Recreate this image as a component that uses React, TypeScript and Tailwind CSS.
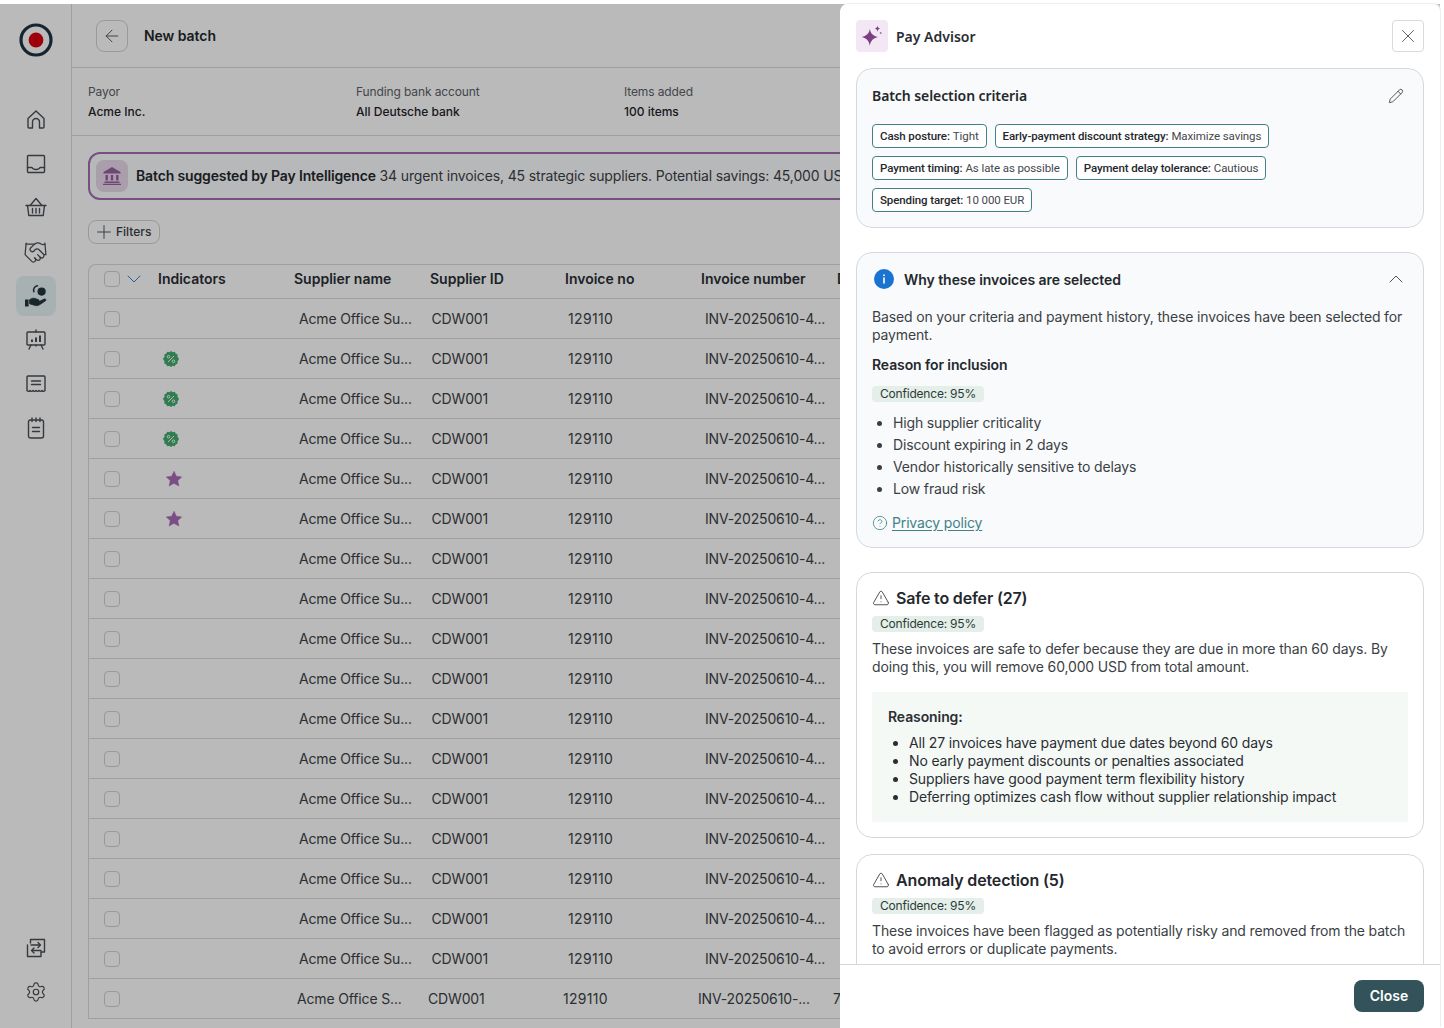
import React from "react";
import { ArrowLeft, Plus, ChevronDown, ChevronUp, X, Pencil, CircleHelp, TriangleAlert, Settings, Handshake } from "lucide-react";

const inter = "font-['Inter','Liberation_Sans',sans-serif]";
const plex = "font-['Noto_Sans','Liberation_Sans',sans-serif]";
const chipFont = "font-['Roboto','Liberation_Sans',sans-serif]";

function Logo() {
  return (
    <svg width="34" height="34" viewBox="0 0 34 34">
      <circle cx="17" cy="17" r="15" fill="none" stroke="#1d3345" strokeWidth="3.2" />
      <circle cx="17" cy="17" r="7.4" fill="#d8000f" />
    </svg>
  );
}

const iconStroke = { fill: "none", stroke: "#4a4f55", strokeWidth: 1.4, strokeLinecap: "round" as const, strokeLinejoin: "round" as const };

function HomeIcon() {
  return (
    <svg className="-mt-[2px]" width="18" height="19" viewBox="0 0 18 19" {...iconStroke}>
      <path d="M1 8.500 9 1l8 7.500v8.500a1 1 0 0 1-1 1h-3.500v-6a3.500 3.500 0 0 0-7 0v6H2a1 1 0 0 1-1-1z" />
    </svg>
  );
}
function Tray() {
  return (
    <svg width="20" height="20" viewBox="0 0 20 20" {...iconStroke}>
      <rect x="1.500" y="1.500" width="17" height="17" rx="1" />
      <path d="M1.500 13.500h4.500c.6 1.400 2 2 4 2s3.400-.6 4-2h4.500" />
    </svg>
  );
}
function Basket() {
  return (
    <svg className="-mt-[2px]" width="22" height="20" viewBox="0 0 22 20" {...iconStroke}>
      <path d="M1 8.500h20" />
      <path d="M2.500 8.500 3.800 18.500h14.400L19.500 8.500" />
      <path d="M5.500 8 11 1.500 16.500 8" />
      <path d="M7.500 11.500v4.500M11 11.500v4.500M14.500 11.500v4.500" />
    </svg>
  );
}
function HandCoin() {
  return (
    <svg width="24" height="24" viewBox="0 0 24 24">
      <path d="M1 15.500h3.600v7H1z" fill="#21363d" />
      <path d="M5.600 15.800c2-1.800 4.400-2 6.400-1l2.600 1c1 .5.7 1.800-.4 1.800h-3.200 4l5.400-2.600c1.200-.5 2.200 1 1.100 1.800l-6 4c-1.400.9-3 1-4.400.6l-5.500-1.600z" fill="#21363d" stroke="#21363d" strokeWidth=".8" strokeLinejoin="round" />
      <circle cx="17.600" cy="7.600" r="4.100" fill="#21363d" />
      <path d="M13.500 1.800a4.400 4.400 0 0 0-3.600 6" fill="none" stroke="#21363d" strokeWidth="1.500" strokeLinecap="round" />
    </svg>
  );
}
function Board() {
  return (
    <svg width="22" height="22" viewBox="0 0 22 22" {...iconStroke}>
      <rect x="2" y="3" width="18" height="13" rx="1" />
      <path d="M11 1v2M6 16l-2 4M16 16l2 4M11 16v1" />
      <path d="M7 13v-2.500M11 13V8.500M15 13V6.500" strokeWidth="2" strokeLinecap="butt" />
    </svg>
  );
}
function Receipt() {
  return (
    <svg width="20" height="18" viewBox="0 0 20 18" {...iconStroke}>
      <path d="M1 15.500V2a1 1 0 0 1 1-1h16a1 1 0 0 1 1 1v13.500c-1.100 1.200-2.100 1.200-3 0-1 1.200-2 1.200-3 0-1 1.200-2 1.200-3 0-1 1.200-2 1.200-3 0-1 1.200-2 1.200-3 0-.9 1.200-1.900 1.200-3 0z" />
      <path d="M5.500 6h9M5.500 9.500h9" />
    </svg>
  );
}
function Notepad() {
  return (
    <svg className="-mt-[1px]" width="18" height="22" viewBox="0 0 18 22" {...iconStroke}>
      <rect x="1.500" y="3" width="15" height="18" rx="2" />
      <path d="M5 1v3.500M9 1v3.500M13 1v3.500M5.500 10.500h7M5.500 14.500h7" />
    </svg>
  );
}
function Transfer() {
  return (
    <svg width="20" height="20" viewBox="0 0 20 20" {...iconStroke}>
      <path d="M4.500 5V1.500h14V14h-3.500" />
      <path d="M1.500 7v11.500H15V14" />
      <path d="M5 7H14.500M12 4.500 14.500 7 12 9.500M15 12.500H5.500M8 10 5.500 12.500 8 15" />
    </svg>
  );
}
function Bank() {
  return (
    <svg width="20" height="18" viewBox="0 0 20 18" fill="#9a5fa3">
      <path d="M10 0 18.500 5v1.500h-17V5z" />
      <path d="M3.500 8h2.400v5.500H3.500zM8.800 8h2.400v5.500H8.800zM14.100 8h2.400v5.500h-2.400zM2.500 14.500h15V16h-15zM1 16.800h18V18H1z" />
    </svg>
  );
}
function Percent() {
  return (
    <svg width="16" height="16" viewBox="0 0 16 16">
      <path d="M8 0l1.700 1.200 2-.4 1 1.800 1.900.8-.1 2.100L16 8l-1.500 2.500.1 2.100-1.900.8-1 1.800-2-.4L8 16l-1.700-1.200-2 .4-1-1.800-1.900-.8.1-2.100L0 8l1.500-2.500-.1-2.100 1.900-.8 1-1.800 2 .4z" fill="#44ab6e" />
      <path d="M5 11 11 5" stroke="#ffffff" strokeWidth="1" />
      <circle cx="5.500" cy="5.700" r="1.300" fill="none" stroke="#ffffff" strokeWidth="1" />
      <circle cx="10.500" cy="10.300" r="1.300" fill="none" stroke="#ffffff" strokeWidth="1" />
    </svg>
  );
}
function Star() {
  return (
    <svg width="16" height="16" viewBox="0 0 14 14">
      <path d="M7 .3l2 4.300 4.700.6-3.400 3.200.9 4.700L7 10.800l-4.200 2.300.9-4.700L.3 5.200 5 4.600z" fill="#a86cb5" stroke="#a86cb5" strokeWidth=".5" strokeLinejoin="round" />
    </svg>
  );
}
function Sparkle() {
  return (
    <svg width="24" height="24" viewBox="0 0 22 22" fill="#7b3f82">
      <path d="M9 4.500c.7 4 2.800 6.200 7.500 7.500-4.700 1.300-6.800 3.500-7.500 8-.7-4.500-2.800-6.700-7.500-8C6.200 10.700 8.300 8.500 9 4.500z" />
      <path d="M16 1.500c.3 1.500 1 2.300 2.500 2.700-1.500.4-2.200 1.200-2.500 2.800-.3-1.600-1-2.400-2.500-2.800 1.500-.4 2.200-1.200 2.500-2.700zM19 7c.1.7.4 1 1.200 1.200-.8.2-1.100.5-1.200 1.200-.1-.7-.4-1-1.200-1.200.8-.2 1.100-.5 1.200-1.200z" />
    </svg>
  );
}
function Info() {
  return (
    <svg width="20" height="20" viewBox="0 0 20 20">
      <circle cx="10" cy="10" r="10" fill="#1a73d1" />
      <rect x="9.200" y="8.500" width="1.600" height="6" fill="#fff" />
      <rect x="9.200" y="5.500" width="1.600" height="1.600" fill="#fff" />
    </svg>
  );
}

const NavItem = ({ children, active }: { children: React.ReactNode; active?: boolean }) => (
  <div className={`flex h-10 w-10 items-center justify-center rounded-lg ${active ? "bg-[#e6f3f5]" : ""}`}>{children}</div>
);

function Sidebar() {
  return (
    <aside className="flex h-full w-[72px] shrink-0 flex-col items-center border-r border-[#d8dade] bg-white pt-[19px]">
      <Logo />
      <div className="mt-[43px] flex flex-col gap-1">
        <NavItem><HomeIcon /></NavItem>
        <NavItem><Tray /></NavItem>
        <NavItem><Basket /></NavItem>
        <NavItem><Handshake size={25} strokeWidth={1.2} color="#4a4f55" /></NavItem>
        <NavItem active><HandCoin /></NavItem>
        <NavItem><Board /></NavItem>
        <NavItem><Receipt /></NavItem>
        <NavItem><Notepad /></NavItem>
      </div>
      <div className="mt-auto mb-4 flex flex-col gap-1">
        <NavItem><Transfer /></NavItem>
        <NavItem><Settings size={22} strokeWidth={1.3} color="#4a4f55" /></NavItem>
      </div>
    </aside>
  );
}

const Meta = ({ label, value }: { label: string; value: string }) => (
  <div className="w-[268px] shrink-0">
    <div className="text-[12px] leading-4 tracking-[-0.12px] text-[#5c6168]">{label}</div>
    <div className="mt-1 text-[12px] font-medium leading-4 text-[#1f2328]">{value}</div>
  </div>
);

const Box = () => <span className="block h-4 w-4 shrink-0 rounded-[4px] border border-[#cfd2d6] bg-white" />;

const Row = ({ mark, last }: { mark?: "p" | "s"; last?: boolean }) => (
  <div className="flex h-10 items-center border-b border-[#d8dade] text-[14px] leading-5 tracking-[-0.15px] text-[#3b3f45]">
    <div className="flex w-[208px] shrink-0 items-center pl-[15px]">
      <Box />
      {mark === "p" && <span className="ml-[43px]"><Percent /></span>}
      {mark === "s" && <span className="ml-[46px]"><Star /></span>}
    </div>
    {last ? (
      <>
        <div className="w-[131px] shrink-0 whitespace-nowrap">Acme Office S...</div>
        <div className="w-[135px] shrink-0">CDW001</div>
        <div className="w-[135px] shrink-0 tracking-[0.3px]">129110</div>
        <div className="w-[135px] shrink-0 whitespace-nowrap">INV-20250610-...</div>
        <div className="whitespace-nowrap">7</div>
      </>
    ) : (
      <>
        <div className="w-[133px] shrink-0 whitespace-nowrap pl-[2px]">Acme Office Su...</div>
        <div className="w-[136px] shrink-0 whitespace-nowrap pl-[1.500px]">CDW001</div>
        <div className="w-[136px] shrink-0 whitespace-nowrap pl-[2px] tracking-[0.35px]">129110</div>
        <div className="shrink-0 whitespace-nowrap pl-[3px]">INV-20250610-4...</div>
      </>
    )}
  </div>
);

const marks: ("p" | "s" | undefined)[] = [undefined, "p", "p", "p", "s", "s", ...Array(12).fill(undefined)];

function Main() {
  return (
    <main className={`${inter} h-full min-w-0 flex-1 overflow-hidden bg-white`}>
      <header className="flex h-16 items-center gap-[14px] border-b border-[#d8dade] pl-6">
        <span className="flex h-8 w-8 items-center justify-center rounded-lg border border-[#d0d3d8]"><ArrowLeft size={20} strokeWidth={1.100} color="#4a4f55" /></span>
        <span className="pl-[2px] text-[14px] font-semibold tracking-[-0.05px] text-[#24282d]">New batch</span>
      </header>
      <section className="flex h-[68px] items-center border-b border-[#d8dade] pl-4 pt-[1px]">
        <Meta label="Payor" value="Acme Inc." />
        <Meta label="Funding bank account" value="All Deutsche bank" />
        <Meta label="Items added" value="100 items" />
      </section>
      <div className="pl-4 pt-4">
        <div className="flex h-[48px] w-[1340px] items-center gap-2 rounded-xl border-2 border-[#a96cb3] bg-[#fbfdff] pl-[6px]">
          <span className="flex h-8 w-8 shrink-0 items-center justify-center rounded-lg bg-[#e9d9eb]"><Bank /></span>
          <span className="mb-[1px] whitespace-nowrap text-[14px] tracking-[-0.14px] text-[#24282d]"><b className="font-semibold">Batch suggested by Pay Intelligence</b> <span className="text-[#3b3f45]">34 urgent invoices, 45 strategic suppliers. Potential savings: 45,000 USD</span></span>
        </div>
        <div className="mt-[20px] flex h-6 w-[72px] items-center gap-[1px] rounded-lg border border-[#d0d3d8] pl-[4px] text-[12px] font-medium text-[#3b3f45]">
          <Plus size={22} strokeWidth={1} color="#3b4f55" /><span className="mb-[1px]">Filters</span>
        </div>
        <div className="mt-[20px] w-[1340px] rounded-t-lg border-x border-t border-[#d8dade]">
          <div className="flex h-[34px] items-center border-b border-[#d8dade] pb-[6px] text-[14px] font-semibold text-[#2a2e33]">
            <div className="flex w-[205px] shrink-0 items-center pl-[15px]">
              <Box />
              <ChevronDown size={24} strokeWidth={0.9} color="#1a73d1" className="ml-[2px]" />
              <span className="ml-[12px]">Indicators</span>
            </div>
            <div className="w-[136px] shrink-0">Supplier name</div>
            <div className="w-[135px] shrink-0">Supplier ID</div>
            <div className="w-[136px] shrink-0">Invoice no</div>
            <div className="w-[136px] shrink-0">Invoice number</div>
            <div>Due date</div>
          </div>
          {marks.map((m, i) => <Row key={i} mark={m} last={i === 17} />)}
        </div>
      </div>
    </main>
  );
}

const Chip = ({ k, v }: { k: string; v: string }) => (
  <span className="flex h-6 items-center whitespace-nowrap rounded-[4px] border border-[#3f8288] bg-white px-[7px] pt-[1px] text-[11.500px] tracking-[-0.1px] text-[#43484e]">
    <b className="mr-[3px] font-medium text-[#24282d]">{k}</b>{v}
  </span>
);

const Conf = () => (
  <span className="inline-flex h-4 items-center rounded-[4px] bg-[#e3efe8] px-2 text-[12px] leading-4 tracking-[-0.2px] text-[#2f3a37]">Confidence: 95%</span>
);

function Panel() {
  return (
    <aside className={`${inter} absolute bottom-0 left-[840px] top-1 flex w-[600px] flex-col rounded-t-lg bg-white shadow-[1px_-1px_0_#eeeeee]`}>
      <div className="flex h-16 shrink-0 items-center justify-between pl-4 pr-4">
        <div className="flex items-center gap-2">
          <span className="flex h-8 w-8 items-center justify-center rounded-[4px] bg-[#f3e6f5]"><Sparkle /></span>
          <span className={`${plex} text-[14px] font-semibold text-[#2a2e33]`}>Pay Advisor</span>
        </div>
        <span className="flex h-8 w-8 items-center justify-center rounded-[4px] border border-[#d8dade]"><X size={22} strokeWidth={0.9} color="#3b3f45" /></span>
      </div>
      <div className="min-h-0 flex-1 overflow-hidden px-4">
        <section className="h-40 rounded-2xl border border-[#d5d8de] bg-[#f9fafb] px-[15px] pt-[15px]">
          <div className="flex h-[22px] items-center justify-between pr-[4px]">
            <h2 className={`${plex} text-[14px] font-semibold tracking-[-0.08px] text-[#24282d]`}>Batch selection criteria</h2>
            <Pencil size={16} strokeWidth={1.200} color="#2a2e33" className="mt-[1px]" />
          </div>
          <div className={`${chipFont} mt-[18px] flex flex-col gap-2`}>
            <div className="flex gap-2"><Chip k="Cash posture:" v="Tight" /><Chip k="Early-payment discount strategy:" v="Maximize savings" /></div>
            <div className="flex gap-2"><Chip k="Payment timing:" v="As late as possible" /><Chip k="Payment delay tolerance:" v="Cautious" /></div>
            <div className="flex gap-2"><Chip k="Spending target:" v="10 000 EUR" /></div>
          </div>
        </section>
        <section className="mt-6 h-[296px] rounded-2xl border border-[#d5d8de] bg-[#f9fafb] px-[15px] pt-[16px]">
          <div className="flex h-5 items-center justify-between pr-[4px]">
            <div className="flex items-center gap-[10px] pl-[2px]">
              <Info />
              <h2 className="text-[14px] font-semibold tracking-[-0.05px] text-[#24282d]">Why these invoices are selected</h2>
            </div>
            <ChevronUp size={24} strokeWidth={0.9} color="#3b3f45" className="mr-[-4px]" />
          </div>
          <p className="mt-[19px] text-[14px] leading-[18px] tracking-[-0.15px] text-[#3b3f45]">Based on your criteria and payment history, these invoices have been selected for payment.</p>
          <h3 className="mt-[12px] text-[14px] font-semibold leading-[18px] tracking-[-0.1px] text-[#24282d]">Reason for inclusion</h3>
          <div className="mt-[12px] flex"><Conf /></div>
          <ul className="mt-[10px] list-disc pl-[21px] text-[14px] leading-[22px] tracking-[-0.15px] text-[#3b3f45] marker:text-[#3b3f45]">
            <li>High supplier criticality</li>
            <li>Discount expiring in 2 days</li>
            <li>Vendor historically sensitive to delays</li>
            <li>Low fraud risk</li>
          </ul>
          <div className="mt-[13px] flex items-center gap-[4px] text-[14px] leading-5 tracking-[-0.15px] text-[#3f8288]">
            <CircleHelp size={16} strokeWidth={1.200} />
            <span className="underline underline-offset-2">Privacy policy</span>
          </div>
        </section>
        <section className="mt-6 h-[266px] rounded-2xl border border-[#d5d8de] bg-white px-[15px] pt-[15px]">
          <div className="flex h-5 items-center gap-[6px]">
            <TriangleAlert size={18} strokeWidth={1.100} color="#2a2e33" />
            <h2 className="text-[16px] font-semibold tracking-[-0.17px] text-[#24282d]">Safe to defer (27)</h2>
          </div>
          <div className="mt-[8px] flex"><Conf /></div>
          <p className="mt-[8px] text-[14px] leading-[18px] tracking-[-0.15px] text-[#3b3f45]">These invoices are safe to defer because they are due in more than 60 days. By doing this, you will remove 60,000 USD from total amount.</p>
          <div className="mt-4 h-[130px] bg-[#f5f9f6] px-4 pt-4 text-[14px] text-[#2a2e33]">
            <div className="font-semibold leading-[18px] tracking-[-0.1px]">Reasoning:</div>
            <ul className="mt-[8px] list-disc pl-[21px] leading-[18px] tracking-[-0.15px]">
              <li>All 27 invoices have payment due dates beyond 60 days</li>
              <li>No early payment discounts or penalties associated</li>
              <li>Suppliers have good payment term flexibility history</li>
              <li>Deferring optimizes cash flow without supplier relationship impact</li>
            </ul>
          </div>
        </section>
        <section className="mt-4 h-[200px] rounded-2xl border border-[#d5d8de] bg-white px-[15px] pt-[15px]">
          <div className="flex h-5 items-center gap-[6px]">
            <TriangleAlert size={18} strokeWidth={1.100} color="#2a2e33" />
            <h2 className="text-[16px] font-semibold tracking-[-0.15px] text-[#24282d]">Anomaly detection (5)</h2>
          </div>
          <div className="mt-[8px] flex"><Conf /></div>
          <p className="mt-[8px] text-[14px] leading-[18px] tracking-[-0.15px] text-[#3b3f45]">These invoices have been flagged as potentially risky and removed from the batch to avoid errors or duplicate payments.</p>
        </section>
      </div>
      <footer className="flex h-16 shrink-0 items-center justify-end border-t border-[#d5d8de] bg-white pb-[2px] pr-4">
        <span className="flex h-8 w-[70px] items-center justify-center rounded-lg bg-[#33525a] text-[14px] font-semibold text-white">Close</span>
      </footer>
    </aside>
  );
}

export default function App() {
  return (
    <div className="relative h-[1028px] w-[1444px] overflow-hidden bg-white pt-1">
      <div className="flex h-full w-[1440px]">
        <Sidebar />
        <Main />
      </div>
      <div className="absolute bottom-0 left-0 right-1 top-1 bg-black/27" />
      <Panel />
    </div>
  );
}
